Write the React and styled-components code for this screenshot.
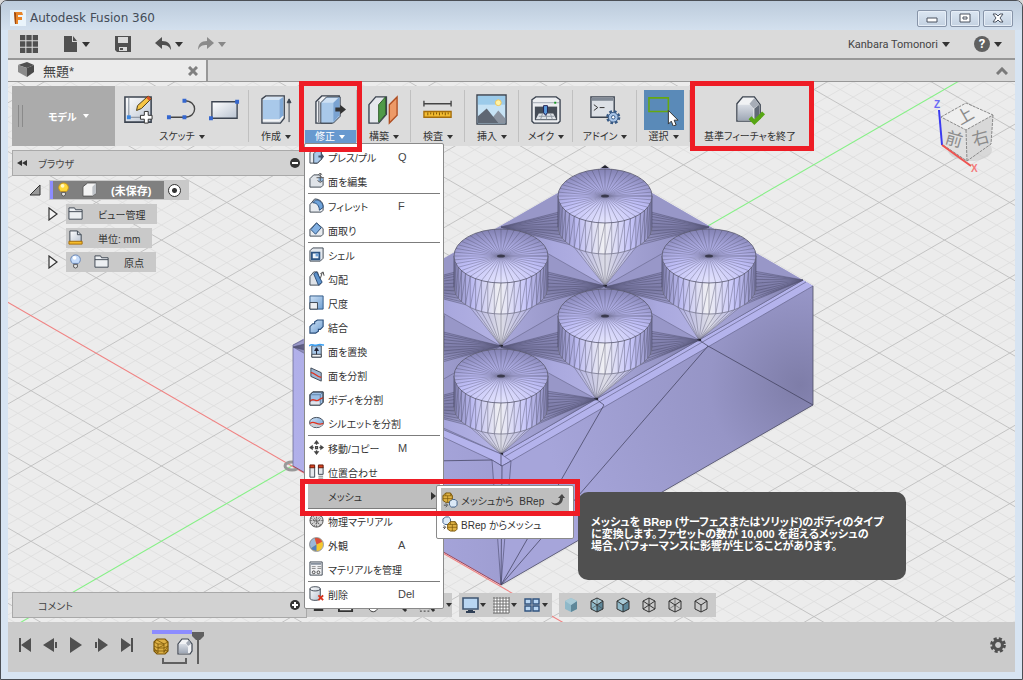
import React from 'react';
import styled, { createGlobalStyle, css } from 'styled-components';

const INK = '#3c4450';
const BLUE = '#a9c9ea';

const points = (list) => list.map((p) => p.join(',')).join(' ');

/* ---------- icons ---------- */

const BIG = {
  sketch: (
    <>
      <path d="M2 3h27v26H2z" fill="url(#steel)" stroke={INK} strokeWidth="1.6" />
      <path d="M6 4v20h20" fill="none" stroke="#7d8794" />
      <path d="M4 22h4v4H4z" fill="#3a86e0" />
      <path d="M14 17l1-5L26 2l3 3-10 10z" fill="#f6c544" stroke="#4a3a12" />
      <path d="M24 4l2-2 3 3-2 2z" fill="#d9532c" />
      <path d="M22 18h4v4h4v4h-4v4h-4v-4h-4v-4h4z" fill="#fff" stroke="#333" />
    </>
  ),
  line: (
    <>
      <path d="M3 24h16c14 0 14-17 0-17" fill="none" stroke="#454545" strokeWidth="1.4" />
      <path d="M1 22h4v4H1zM17 22h4v4h-4zM17 5h4v4h-4z" fill="#3567cf" />
    </>
  ),
  rect: (
    <>
      <path d="M3 8h26v17H3z" fill="url(#steel)" stroke={INK} strokeWidth="1.4" />
      <path d="M0 23h4v4H0zM27 6h4v4h-4z" fill="#3567cf" />
    </>
  ),
  create: (
    <>
      <path d="M2 5l4-3h19v23l-4 5H2z" fill="#dfe3e8" stroke={INK} strokeWidth="1.4" />
      <path d="M3 6h17v20H3z" fill={BLUE} />
      <path d="M3 6l4-3h17l-4 3z" fill="#d5e4f4" />
      <path d="M20 6l4-3v19l-4 4z" fill="#7fa9d8" />
      <path d="M3 27h17l4-4" fill="none" stroke="#fff" />
      <path d="M30 29V7M28 9l2-4 2 4z" fill={INK} stroke={INK} />
    </>
  ),
  modify: (
    <>
      <path d="M2 8l6-6h18l-1 21-7 7H2z" fill="#f0f2f5" stroke={INK} strokeWidth="1.4" />
      <path d="M7 9l6-6h14v20l-7 7H7z" fill={BLUE} stroke={INK} />
      <path d="M8 9l5-5h13l-5 5z" fill="#cfe1f4" />
      <path d="M20 9l6-6v19l-6 7z" fill="#7aa3d2" />
      <path d="M5 7v22" stroke={INK} />
      <path d="M22 14h5v-3l6 5-6 5v-3h-5z" fill="#333" />
    </>
  ),
  construct: (
    <>
      <path d="M1 11l7-8h11v18l-8 9H1z" fill="#e5e8ed" stroke={INK} strokeWidth="1.4" />
      <path d="M11 11l7-8v18l-7 8z" fill="#4f9a48" stroke="#2d5d2a" />
      <path d="M22 11l8-8v19l-8 8z" fill="#ed9a67" stroke="#b04f22" strokeWidth="1.4" />
    </>
  ),
  inspect: (
    <>
      <path d="M2 10h28M2 7v6M30 7v6" fill="none" stroke="#444" strokeWidth="1.4" />
      <path d="M2 18h28v6H2z" fill="#f3bc32" stroke="#a46d0c" strokeWidth="1.4" />
      <path d="M6 19v3M9 19v2M12 19v3M15 19v2M18 19v3M21 19v2M24 19v3M27 19v2" stroke="#7d5300" />
    </>
  ),
  insert: (
    <>
      <path d="M1 1h30v30H1z" fill="#c6e2f4" stroke={INK} strokeWidth="1.4" />
      <path d="M2 2h28v9H2z" fill="#9ccbea" />
      <circle cx="23" cy="9" r="3" fill="#fff3a6" stroke="#f0c659" />
      <path d="M15 27l8-10 7 8v5H15z" fill="#8b939f" />
      <path d="M2 23l9-8 12 15H2z" fill="#5f6773" />
    </>
  ),
  make: (
    <>
      <path d="M2 6l4-3h21l4 3v22l-2 2H4l-2-2z" fill="#eceef1" stroke={INK} strokeWidth="1.4" />
      <path d="M3 9h27" stroke="#9ba3ad" />
      <path d="M5 13h23v14H5z" fill="#454c57" />
      <path d="M9 20h15l3 6H6z" fill="#dfe3e8" />
      <path d="M9 23h16M13 20l-2 6M17 20v6M21 20l2 6" stroke="#929aa5" />
      <path d="M14 12h4v7l-2 3-2-3z" fill="#5c9ee0" stroke="#225" />
      <path d="M25 8h2v2h-2z" fill="#159a22" />
    </>
  ),
  addin: (
    <>
      <path d="M2 3h24v21H2z" fill="#dce0e6" stroke={INK} strokeWidth="1.4" />
      <path d="M3 4h22v3H3z" fill="#808995" />
      <path d="M5 11l4 3-4 3M11 14h5" fill="none" stroke="#333" />
      <circle cx="25" cy="24" r="6" fill="none" stroke="#375984" strokeWidth="2.6" strokeDasharray="2.7 2" />
      <circle cx="25" cy="24" r="5" fill="#a8c5e8" stroke="#375984" />
      <circle cx="25" cy="24" r="1.8" fill="#fff" stroke="#375984" />
    </>
  ),
  select: (
    <>
      <path d="M1 4h20v14H1z" fill="none" stroke="#66a80f" strokeWidth="1.6" />
      <path d="M21 17v14l3-3 2 5 3-1-2-5h4z" fill="#fff" stroke="#333" />
    </>
  ),
  finish: (
    <>
      <path d="M3 10l6-7h12l6 8v14l-4 3H3z" fill="#f1f2f4" stroke={INK} strokeWidth="1.4" />
      <path d="M4 11h13l3 5v11H4z" fill="url(#steelDark)" />
      <path d="M16 10l5-6 5 7-6 4z" fill="#a7adb7" />
      <path d="M21 15l5-4v13l-5 2z" fill="#606975" />
      <path d="M15 26l6 6 11-11-3-3-8 8-3-3z" fill="#57a613" />
    </>
  ),
};

const body = <path d="M1 6l4-4h6l4 4v7l-2 2H1z" fill="#dfe3e8" stroke={INK} />;

const gold = (x, y) => (
  <g transform={`translate(${x} ${y})`}>
    <path d="M0 3l3-3h5l2 3v5L8 10H3L0 8z" fill="#dfb244" stroke="#795508" />
    <path d="M0 3h10M5 3v7M0 6h10M3 0v3M8 0v3" fill="none" stroke="#795508" strokeWidth="0.7" />
  </g>
);

const silver = (x, y) => (
  <path
    transform={`translate(${x} ${y})`}
    d="M0 3l3-2h3l2 2v4L6 9H2L0 7z"
    fill="#dbe9f7"
    stroke="#3f5f88"
  />
);

const SMALL = {
  press: (
    <>
      <path d="M1 4l3-3h9v10l-4 4H1z" fill="#e8ebef" stroke={INK} />
      <path d="M5 5l3-3h5v9l-4 4H5z" fill={BLUE} stroke={INK} />
      <path d="M10 7h3V4l3 4-3 4V9h-3z" fill="#44546a" />
    </>
  ),
  editFace: (
    <>
      {body}
      <path d="M10 9h5V6l-5-2z" fill="#8eb6e3" />
      <path d="M12 0v9M8 5h8M10 2l2-2 2 2M9 8l3 2 3-2" fill="none" stroke="#555" />
    </>
  ),
  fillet: (
    <>
      <path d="M1 7l5-6c6 0 9 4 9 8v4l-2 2H1z" fill="#e8ebef" stroke={INK} />
      <path d="M4 5l3-3c5 0 8 4 8 8l-4 3c0-5-3-8-7-8z" fill="#6fa3da" stroke="#294c78" />
    </>
  ),
  chamfer: (
    <>
      <path d="M1 8l7-7 7 6v6l-2 2H1z" fill="#e8ebef" stroke={INK} />
      <path d="M2 8l6-7 5 5-6 7z" fill="#82b0e2" stroke="#294c78" />
    </>
  ),
  shell: (
    <>
      <path d="M1 4l3-3h11v11l-3 3H1z" fill="#e4e8ed" stroke={INK} />
      <path d="M3 6h8v7H3z" fill="#eef4fb" stroke="#2e5584" strokeWidth="2" />
      <path d="M7 7h3v3H7z" fill="#6fa3da" />
    </>
  ),
  draft: (
    <>
      <path d="M1 6l4-5h4l4 12-2 2H1z" fill="#dfe3e8" stroke={INK} />
      <path d="M5 3l3-2 6 11-4 3z" fill="#5e93cc" stroke="#294c78" />
      <path d="M12 8l2-6M12 3l3-2 1 4" fill="none" stroke="#444" />
    </>
  ),
  scale: (
    <>
      <path d="M1 1h14v14H1z" fill="url(#sky)" stroke="#2e5584" />
      <path d="M1 8h8v7H1z" fill="#eef0f3" stroke={INK} />
    </>
  ),
  combine: (
    <path
      d="M1 8l3-3h2V3l3-2h6v7l-3 3h-2v2l-3 2H1z"
      fill="url(#sky)"
      stroke="#294c78"
      strokeWidth="1.2"
    />
  ),
  replace: (
    <>
      <path d="M3 3h10v12H3z" fill={BLUE} stroke={INK} />
      <path d="M3 12h10v3H3z" fill="#f2f2f2" stroke={INK} />
      <path d="M0 3c4-3 5 1 9-1 3-1 4 0 7 0" fill="none" stroke="#3aa0f5" strokeWidth="1.6" />
      <path d="M8 12V6M6 8l2-3 2 3z" fill="#223" stroke="#223" />
    </>
  ),
  splitFace: (
    <>
      <path d="M2 1l11 5v9L2 10z" fill="#9db6d3" stroke={INK} />
      <path d="M2 6c3-1 5 4 11 5" fill="none" stroke="#e0321f" strokeWidth="1.4" />
    </>
  ),
  splitBody: (
    <>
      <path d="M1 4l3-3h11v11l-3 3H1z" fill="#9cbfe5" stroke={INK} />
      <path d="M1 11h11v4H1z" fill="#e0e4ea" />
      <path d="M1 4h11l3-3M12 4v11" fill="none" stroke="#5d7fa8" />
      <path d="M1 11c4-5 6 2 10-2l4-2" fill="none" stroke="#e0321f" strokeWidth="1.4" />
      <path d="M1 4l3-3h11v11l-3 3H1z" fill="none" stroke={INK} />
    </>
  ),
  silhouette: (
    <>
      <ellipse cx="8" cy="8" rx="7.4" ry="5.4" fill="url(#sky)" stroke={INK} />
      <path d="M1 9c5-4 7 3 14 0-1 3-4 4-7 4s-6-1-7-4z" fill="#c9ced6" />
      <path d="M1 9c5-4 7 3 14 0" fill="none" stroke="#e0321f" strokeWidth="1.4" />
    </>
  ),
  move: (
    <>
      <path d="M8 0l3 4H5zM8 16l3-4H5zM0 8l4-3v6zM16 8l-4-3v6z" fill="#444" />
      <path d="M7 7h2v2H7zM8 3v2M8 11v2M3 8h2M11 8h2" fill="none" stroke="#444" strokeWidth="1.4" />
    </>
  ),
  align: (
    <>
      <path d="M1 3h5v11H1zM10 3h5v8h-5z" fill="#e4e7eb" stroke={INK} />
      <path d="M1 1h5v3H1zM10 1h5v3h-5z" fill="#d9421f" stroke="#651a0a" />
      <path d="M10 13h5M10 15h5" stroke="#777" />
    </>
  ),
  material: (
    <>
      <circle cx="8" cy="8" r="7" fill="#d5d5d5" stroke="#555" />
      <path
        d="M2 5l11 8M3 12L13 3M1 8h14M8 1v14M4 3l8 11M5 14l8-9"
        stroke="#666"
        strokeDasharray="2 1"
      />
    </>
  ),
  appearance: (
    <>
      <circle cx="8" cy="8" r="7" fill="#f5c82e" />
      <path d="M8 8L2 12A7 7 0 0 1 6 1z" fill="#9cb7d9" />
      <path d="M8 8L6 1a7 7 0 0 1 8 4z" fill="#dc4e3b" />
      <path d="M8 8l-6 4a7 7 0 0 0 6 3z" fill="#4f7fc4" />
      <circle cx="8" cy="8" r="7.4" fill="none" stroke="#777" strokeWidth="0.8" />
    </>
  ),
  manage: (
    <>
      <path d="M1 1h13v14H1z" fill="#f2f3f5" stroke={INK} />
      <path d="M2 2h11v2H2z" fill="#87919e" />
      <path d="M3 6h4M3 8h4M9 6h4M9 8h4" stroke="#888" />
      <circle cx="5" cy="12" r="1.5" fill="none" stroke="#444" />
      <circle cx="10" cy="12" r="1.5" fill="none" stroke="#444" />
    </>
  ),
  remove: (
    <>
      <path d="M1 3c0-3 11-3 11 0v10c0 3-11 3-11 0z" fill="url(#steel)" stroke={INK} />
      <path d="M1 3c0 3 11 3 11 0" fill="none" stroke={INK} />
      <path d="M10 10l5 5M15 10l-5 5" stroke="#d8321c" strokeWidth="2" />
    </>
  ),
  toBRep: (
    <>
      {gold(1, 1)}
      {silver(8, 7)}
      <path d="M2 14h3M4 12l2 2-2 2" fill="none" stroke="#444" />
    </>
  ),
  toMesh: (
    <>
      {silver(1, 0)}
      {gold(6, 6)}
      <path d="M1 12h2M2 10l2 2-2 2" fill="none" stroke="#444" />
    </>
  ),
  cube: (
    <>
      <path d="M1 5l5-4h9v11l-4 3H1z" fill="#f4f4f4" stroke="#555" />
      <path d="M11 5l4-4v11l-4 3z" fill="#bfc3c8" />
    </>
  ),
  folder: (
    <>
      <path d="M1 4V2h6l1 2h7v10H1z" fill="#eceff2" stroke={INK} />
      <path d="M1 6h14" stroke={INK} />
    </>
  ),
  units: (
    <>
      <path d="M2 1h8l4 4v8H2z" fill="url(#steel)" stroke={INK} />
      <path d="M10 1v4h4" fill="none" stroke={INK} />
      <path d="M1 12h14v3H1z" fill="#f6bd2c" stroke="#a66c08" />
    </>
  ),
  bulb: (
    <>
      <path d="M5 10C1 7 3 1 8 1s7 6 3 9z" fill="#ffd83a" stroke="#c99516" />
      <ellipse cx="7" cy="4" rx="2" ry="2" fill="#fff8c4" />
      <path d="M6 11h4v3L8 15l-2-1z" fill="#e3e3e3" stroke="#555" />
    </>
  ),
  bulbOff: (
    <>
      <path d="M5 10C1 7 3 1 8 1s7 6 3 9z" fill="#c5dcfb" stroke="#6583b3" />
      <ellipse cx="7" cy="4" rx="2" ry="2" fill="#fff" />
      <path d="M6 11h4v3L8 15l-2-1z" fill="#e3e3e3" stroke="#555" />
    </>
  ),
  grid9: (
    <path
      d="M0 0h5v5H0zM6 0h5v5H6zM12 0h5v5h-5zM0 6h5v5H0zM6 6h5v5H6zM12 6h5v5h-5zM0 12h5v5H0zM6 12h5v5H6zM12 12h5v5h-5z"
      fill="#505050"
    />
  ),
  file: <path d="M2 0h8v6h5v10H2zM11 0l4 5h-4z" fill="#505050" />,
  save: (
    <>
      <path d="M0 0h16v16H2l-2-2z" fill="#505050" />
      <path d="M3 1h10v6H3zM4 11h8v4H4z" fill="#dadada" />
      <path d="M5 12h3v2H5z" fill="#505050" />
    </>
  ),
  undo: <path d="M0 7l7-6v4c6 0 9 3 9 9-2-4-4-5-9-5v4z" fill="#505050" />,
  redo: <path d="M16 7L9 1v4c-6 0-9 3-9 9 2-4 4-5 9-5v4z" fill="#8b8b8b" />,
  doc: (
    <>
      <path d="M0 3l9-3 7 3-7 3z" fill="#505050" />
      <path d="M0 3l9 3v9l-9-5z" fill="#8b8b8b" />
      <path d="M9 6l7-3v7l-7 5z" fill="#4a4a4a" />
    </>
  ),
  monitor: (
    <>
      <path d="M1 1h15v11H1z" fill="#b9d6f2" stroke="#3f5672" strokeWidth="1.6" />
      <path d="M6 13h5v1h2v2H4v-2h2z" fill="#2f3f55" />
    </>
  ),
  mesh: (
    <>
      <path d="M0 0h16v16H0z" fill="#fff" />
      <path
        d="M1 0v16M4 0v16M7 0v16M10 0v16M13 0v16M16 0v16M0 1h16M0 4h16M0 7h16M0 10h16M0 13h16M0 16h16"
        stroke="#333"
        opacity="0.7"
      />
    </>
  ),
  quad: (
    <path
      d="M1 2h6v5H1zM9 2h6v5H9zM1 9h6v5H1zM9 9h6v5H9z"
      fill="#b9d6f2"
      stroke="#32547f"
      strokeWidth="1.4"
    />
  ),
  orbit: <path d="M8 1l3 4H9v6h4v4H3v-4h3V5H4z" fill="#333" />,
  lookAt: <path d="M1 3h14v12H1z" fill="#eee" stroke="#333" strokeWidth="2" />,
  pan: <path d="M3 8c0-7 2-7 3-2 0-7 3-7 3 0 0-6 3-5 3 1 2-4 3 2 2 4-2 6-8 6-10 1z" fill="#fff" stroke="#333" />,
  zoomIcon: (
    <>
      <circle cx="5" cy="5" r="4" fill="#fff" stroke="#333" strokeWidth="1.6" />
      <path d="M8 8l7 7" stroke="#333" strokeWidth="3" />
    </>
  ),
  fit: (
    <>
      <path d="M1 1h10v14H1z" fill="none" stroke="#333" strokeDasharray="2 2" />
      <circle cx="8" cy="6" r="4" fill="#fff" stroke="#333" strokeWidth="1.6" />
      <path d="M11 9l5 6" stroke="#333" strokeWidth="3" />
    </>
  ),
  timelineMesh: (
    <>
      <path d="M1 4l3-3h8l3 3v9l-3 3H4l-3-3z" fill="#ddb045" stroke="#795508" strokeWidth="1.2" />
      <path
        d="M1 4l4 2h6l4-2M1 8l4 2h6l4-2M1 12l4 1h6l4-1M5 6v9M11 6v9M1 10l4 5M5 10l6-3M11 14l4-6M4 2l7 4"
        fill="none"
        stroke="#795508"
        strokeWidth="0.8"
      />
    </>
  ),
  timelineBody: (
    <>
      <path d="M1 6l4-5h6l4 5v7l-2 3H1z" fill="#f2f3f5" stroke={INK} strokeWidth="1.2" />
      <path d="M2 6h7l2 3v6H2z" fill="url(#steelDark)" />
      <path d="M9 5l3-3 2 4-3 2z" fill="#a4abb6" />
    </>
  ),
  gear: (
    <>
      <circle cx="8" cy="8" r="6.4" fill="none" stroke="#505050" strokeWidth="3" strokeDasharray="3 2.03" />
      <circle cx="8" cy="8" r="4.4" fill="none" stroke="#505050" strokeWidth="3" />
    </>
  ),
  first: <path d="M1 1h2v14H1zM13 1v14L3 8z" fill="#505050" />,
  prev: <path d="M11 1v14L0 8zM12 5h2v6h-2z" fill="#505050" />,
  play: <path d="M2 0l12 8-12 8z" fill="#505050" />,
  next: <path d="M5 1v14l10-7zM2 5h2v6H2z" fill="#505050" />,
  last: <path d="M13 1h2v14h-2zM3 1v14l10-7z" fill="#505050" />,
};

const shadeIcon = (fill, mode) => (
  <>
    {fill && (
      <>
        <path d="M8 1l6 3v8l-6 3-6-3V4z" fill="#8fb9c9" />
        <path d="M8 8l6-4v8l-6 3z" fill="#5e8799" />
        <path d="M2 4l6-3 6 3-6 4z" fill="#a9cbd7" />
      </>
    )}
    {mode > 0 && (
      <path d="M8 1l6 3v8l-6 3-6-3V4zM2 4l6 4 6-4M8 8v7" fill="none" stroke="#333" />
    )}
    {mode > 1 && (
      <path d="M8 1v7M2 12l6-4 6 4" fill="none" stroke="#333" opacity={mode > 2 ? 1 : 0.5} />
    )}
  </>
);

const Icon = ({ name, size = 16 }) => (
  <Drawing
    width={size}
    height={size}
    viewBox={size === 32 ? '0 0 33 33' : '0 0 17 17'}
    aria-hidden="true"
  >
    {size === 32 ? BIG[name] : SMALL[name]}
  </Drawing>
);

const GradientDefs = () => (
  <Defs width="0" height="0" aria-hidden="true">
    <defs>
      <linearGradient id="steel" x1="0" y1="0" x2="1" y2="1">
        <stop offset="0" stopColor="#ffffff" />
        <stop offset="1" stopColor="#b9c3d1" />
      </linearGradient>
      <linearGradient id="steelDark" x1="0" y1="0" x2="0" y2="1">
        <stop offset="0" stopColor="#dadee5" />
        <stop offset="1" stopColor="#9fa8b6" />
      </linearGradient>
      <linearGradient id="sky" x1="0" y1="0" x2="1" y2="1">
        <stop offset="0" stopColor="#cfe2f6" />
        <stop offset="1" stopColor="#6f9fd2" />
      </linearGradient>
    </defs>
  </Defs>
);

/* ---------- 3D scene ---------- */

const SLOPE = 0.577;
const ORIGIN = [292, 466];
const STEP = 15.06;

const gridPath = (major) => {
  let d = '';
  for (let i = -75; i <= 75; i += 1) {
    if ((i % 5 === 0) === major && i !== 0) {
      [1, -1].forEach((dir) => {
        const y = (x) => ORIGIN[1] + i * STEP + dir * SLOPE * (x - ORIGIN[0]);
        d += `M-100 ${y(-100)}L1200 ${y(1200)}`;
      });
    }
  }
  return d;
};

const MINOR = gridPath(false);
const MAJOR = gridPath(true);

const RX = 47;
const RY = 27;
const TALL = 31;
const SEGMENTS = 44;

const STUDS = [
  { c: [605, 196], right: [709, 227], down: [605, 286] },
  { c: [501, 256], right: [605, 286], down: [501, 346] },
  { c: [709, 256], right: [803, 280], down: [699, 340] },
  { c: [397, 316], right: [501, 346], down: [397, 406] },
  { c: [605, 316], right: [699, 340], down: [596, 399] },
  { c: [501, 376], right: [596, 399], down: [501, 454] },
];

const ring = (cx, cy, from, to) => {
  const out = [];
  for (let i = from; i <= to; i += 1) {
    const a = (i / SEGMENTS) * Math.PI * 2;
    out.push([cx + RX * Math.cos(a), cy + RY * Math.sin(a)]);
  }
  return out;
};

const spokes = (tip, list) => list.map((p) => `M${tip[0]} ${tip[1]}L${p[0]} ${p[1]}`).join('');

const Stud = ({ c, right, down }) => {
  const [cx, cy] = c;
  const left = [cx - 104, cy + TALL];
  const middle = [cx, cy + TALL];
  const rightRing = ring(cx, cy + TALL, -5, 5);
  const downRing = ring(cx, cy + TALL, 6, 16);
  const leftRing = ring(cx, cy + TALL, 17, 27);
  const top = ring(cx, cy, 0, SEGMENTS);
  const front = ring(cx, cy, 0, SEGMENTS / 2);
  const base = ring(cx, cy + TALL, 0, SEGMENTS / 2);
  const wall = front
    .map((p, i) => {
      const b = base[i];
      const n = base[i + 1] || b;
      return `M${p[0]} ${p[1]}L${b[0]} ${b[1]}M${p[0]} ${p[1]}L${n[0]} ${n[1]}`;
    })
    .join('');

  return (
    <g>
      <polygon points={points([left, middle, down])} fill="url(#slopeLeft)" />
      <polygon points={points([right, middle, down])} fill="url(#slopeRight)" />
      <polygon points={points([left, ...leftRing])} fill="url(#fanSide)" />
      <polygon points={points([right, ...rightRing])} fill="url(#fanSide)" />
      <polygon points={points([down, ...downRing])} fill="url(#fanDown)" />
      <path
        d={spokes(left, leftRing) + spokes(right, rightRing)}
        stroke="#3a3a56"
        strokeWidth="0.6"
        opacity="0.6"
      />
      <path d={spokes(down, downRing)} stroke="#45455c" strokeWidth="0.6" opacity="0.6" />
      <path d={`M${left}L${down}L${right}`} fill="none" stroke="#4c4c6c" strokeWidth="0.6" opacity="0.7" />
      <polygon points={points([...front, ...[...base].reverse()])} fill="url(#wall)" />
      <path d={wall} stroke="#4c4c66" strokeWidth="0.6" opacity="0.65" />
      <polyline points={points(base)} fill="none" stroke="#6c6c80" strokeWidth="0.7" />
      <ellipse cx={cx} cy={cy} rx={RX} ry={RY} fill="url(#cap)" stroke="#5c5c70" strokeWidth="0.8" />
      <path d={spokes(c, top)} stroke="#46465e" strokeWidth="0.5" opacity="0.65" />
      <ellipse cx={cx} cy={cy} rx="4" ry="1.6" fill="#23232f" opacity="0.7" />
      <ellipse cx={down[0]} cy={down[1]} rx="2.4" ry="1.2" fill="#22222c" />
    </g>
  );
};

const Scene = () => (
  <SceneSvg viewBox="8 82 1007 540" preserveAspectRatio="xMidYMid slice" aria-label="3D ビュー">
    <defs>
      <linearGradient id="wall">
        <stop offset="0" stopColor="#8b8abb" />
        <stop offset="0.2" stopColor="#bdbcf2" />
        <stop offset="0.48" stopColor="#efeff3" />
        <stop offset="0.78" stopColor="#c6c5fa" />
        <stop offset="1" stopColor="#8b8abb" />
      </linearGradient>
      <radialGradient id="cap" cx="0.5" cy="0.95" r="0.95">
        <stop offset="0" stopColor="#e2e2fc" />
        <stop offset="0.5" stopColor="#bebdf6" />
        <stop offset="1" stopColor="#8281b2" />
      </radialGradient>
      <linearGradient id="fanSide" x1="0" y1="0" x2="0" y2="1">
        <stop offset="0" stopColor="#8d8cbc" />
        <stop offset="0.6" stopColor="#7c7ba6" />
        <stop offset="1" stopColor="#a3a2d2" />
      </linearGradient>
      <linearGradient id="fanDown">
        <stop offset="0" stopColor="#b0afe2" />
        <stop offset="0.5" stopColor="#dcdce6" />
        <stop offset="1" stopColor="#b0afe2" />
      </linearGradient>
      <linearGradient id="slopeLeft">
        <stop offset="0" stopColor="#8887b4" />
        <stop offset="0.5" stopColor="#a9a8de" />
        <stop offset="1" stopColor="#b4b3e4" />
      </linearGradient>
      <linearGradient id="slopeRight">
        <stop offset="0" stopColor="#a9a8da" />
        <stop offset="0.6" stopColor="#9897c8" />
        <stop offset="1" stopColor="#7c7ba6" />
      </linearGradient>
      <radialGradient id="rightFace" gradientUnits="userSpaceOnUse" cx="800" cy="385" r="260">
        <stop offset="0" stopColor="#7e7da8" />
        <stop offset="0.35" stopColor="#9695c6" />
        <stop offset="1" stopColor="#a6a5da" />
      </radialGradient>
      <linearGradient id="leftFace">
        <stop offset="0" stopColor="#b1b0ea" />
        <stop offset="1" stopColor="#9f9ed2" />
      </linearGradient>
    </defs>

    <rect x="-100" y="0" width="1300" height="760" fill="#ececec" />
    <path d={MINOR} stroke="#dddddd" strokeWidth="0.8" />
    <path d={MAJOR} stroke="#bebebe" strokeWidth="0.9" />
    <path d="M-100 692L1200 -58" stroke="#86f086" strokeWidth="1.1" />
    <path d="M-100 240L1200 990" stroke="#f08282" strokeWidth="1.1" />
    <ellipse cx="292" cy="466" rx="7" ry="4" fill="none" stroke="#999" strokeWidth="3" />

    <polygon points="293,345 605,166 813,286 813,405 501,585 293,466" fill="#9f9ed2" />
    <polygon points="293,345 501,460 501,585 293,466" fill="url(#leftFace)" />
    <polygon points="501,460 813,286 813,405 501,585" fill="url(#rightFace)" />
    <polygon points="293,345 605,166 813,286 501,462" fill="#9897c8" />
    <polygon points="501,454 803,280 813,286 511,461" fill="#b4b3ec" />
    <path d="M501 454L803 280M504 457L806 282M511 461L813 286" stroke="#66668c" strokeWidth="0.7" />
    {STUDS.map((stud) => (
      <Stud key={stud.c.join('-')} {...stud} />
    ))}
    <path
      d="M430 424L501 454L511 461L502 466L492 460L430 431z"
      fill="#b4b3ec"
      stroke="#66658c"
      strokeWidth="0.7"
    />
    <polygon points="492,460 502,466 511,461 501,585" fill="#a6a5da" stroke="#54547a" strokeWidth="0.7" />
    <path
      d="M502 466L501 585M708 346L501 585M708 346L813 405M604 405L501 585M430 461L492 460M699 340L708 346M596 399L604 405M501 454V466"
      fill="none"
      stroke="#3c3c58"
      strokeWidth="0.7"
    />
    <path d="M813 286V405L501 585" fill="none" stroke="#4e4e62" strokeWidth="0.8" />
    <path d="M293 466L501 585" stroke="#a04458" strokeWidth="1" />
    <path d="M293 345V466M293 345L303 340" stroke="#6c6c96" strokeWidth="0.8" />
    <path d="M605 165l-4 3h8z" fill="#23232f" />
  </SceneSvg>
);

const ViewCube = () => (
  <CubeSvg width="84" height="84" viewBox="928 92 84 84" aria-label="ビューキューブ">
    <ellipse cx="970" cy="150" rx="22" ry="11" fill="#c4c4c4" opacity="0.5" />
    <polygon points="941,117 966,130 967,161 943,145" fill="#e0e0e0" />
    <polygon points="966,130 993,115 991,144 967,161" fill="#d8d8d8" />
    <polygon points="941,117 966,103 993,115 966,130" fill="#efefef" />
    <path
      d="M941 117L966 103L993 115L966 130zM966 130L967 161M993 115L991 144L967 161L943 145"
      fill="none"
      stroke="#8a8a8a"
      strokeDasharray="3 1"
    />
    <path d="M939 110L942 145" stroke="#3b3bf0" strokeWidth="2" />
    <path d="M942 145L971 166" stroke="#ef5350" strokeWidth="2" />
    <CubeText x="957" y="122" transform="rotate(-30 965 117)">上</CubeText>
    <CubeText x="946" y="145" transform="rotate(16 953 138)">前</CubeText>
    <CubeText x="972" y="144" transform="rotate(-16 980 138)">右</CubeText>
    <AxisText x="934" y="108" fill="#6a6af5">Z</AxisText>
    <AxisText x="971" y="172" fill="#f47a7a">X</AxisText>
  </CubeSvg>
);

/* ---------- data ---------- */

const RIBBON = [
  { label: 'スケッチ', icons: ['sketch', 'line', 'rect'], width: 134 },
  { label: '作成', icons: ['create'], width: 54 },
  { label: '修正', icons: ['modify'], width: 54, open: true },
  { label: '構築', icons: ['construct'], width: 54 },
  { label: '検査', icons: ['inspect'], width: 54 },
  { label: '挿入', icons: ['insert'], width: 54 },
  { label: 'メイク', icons: ['make'], width: 54 },
  { label: 'アドイン', icons: ['addin'], width: 64 },
  { label: '選択', icons: ['select'], width: 53, picked: true },
];

const MENU = [
  { label: 'プレス/プル', icon: 'press', hotkey: 'Q' },
  { label: '面を編集', icon: 'editFace', end: true },
  { label: 'フィレット', icon: 'fillet', hotkey: 'F' },
  { label: '面取り', icon: 'chamfer', end: true },
  { label: 'シェル', icon: 'shell' },
  { label: '勾配', icon: 'draft' },
  { label: '尺度', icon: 'scale' },
  { label: '結合', icon: 'combine' },
  { label: '面を置換', icon: 'replace' },
  { label: '面を分割', icon: 'splitFace' },
  { label: 'ボディを分割', icon: 'splitBody' },
  { label: 'シルエットを分割', icon: 'silhouette', end: true },
  { label: '移動/コピー', icon: 'move', hotkey: 'M' },
  { label: '位置合わせ', icon: 'align' },
  { label: 'メッシュ', submenu: true, end: true },
  { label: '物理マテリアル', icon: 'material' },
  { label: '外観', icon: 'appearance', hotkey: 'A' },
  { label: 'マテリアルを管理', icon: 'manage', end: true },
  { label: '削除', icon: 'remove', hotkey: 'Del' },
];

const SHADES = [
  [true, 0],
  [true, 2],
  [true, 1],
  [false, 3],
  [false, 2],
  [false, 1],
];

/* ---------- parts ---------- */

const Submenu = () => (
  <SubmenuBox role="menu">
    <MenuItem type="button" role="menuitem" $active>
      <Icon name="toBRep" />
      <MenuLabel>メッシュから&nbsp; BRep</MenuLabel>
      <Drawing width="14" height="14" viewBox="0 0 14 14" aria-hidden="true">
        <path d="M0 9c4 3 9 1 9-4H7l4-4 3 4h-2c0 7-8 10-12 4z" fill="#484848" />
      </Drawing>
    </MenuItem>
    <MenuItem type="button" role="menuitem">
      <Icon name="toMesh" />
      <MenuLabel>BRep からメッシュ</MenuLabel>
    </MenuItem>
    <Tooltip role="tooltip">
      メッシュを BRep (サーフェスまたはソリッド)のボディのタイプ
      <br />
      に変換します。ファセットの数が 10,000 を超えるメッシュの
      <br />
      場合、パフォーマンスに影響が生じることがあります。
    </Tooltip>
  </SubmenuBox>
);

const ModifyMenu = () => (
  <MenuPanel role="menu">
    {MENU.map(({ label, icon, hotkey, end, submenu }) => (
      <MenuRow key={label} $end={end}>
        <MenuItem type="button" role="menuitem" $active={submenu}>
          {icon ? <Icon name={icon} /> : <IconGap />}
          <MenuLabel>{label}</MenuLabel>
          {hotkey && <Hotkey>{hotkey}</Hotkey>}
          {submenu && <SubArrow />}
        </MenuItem>
        {submenu && <Submenu />}
        {submenu && <Highlight $kind="row" />}
      </MenuRow>
    ))}
  </MenuPanel>
);

const Ribbon = () => (
  <RibbonBar>
    <ModeButton type="button">
      <Grip />
      <span>モデル</span>
      <Caret color="#fff" />
    </ModeButton>
    {RIBBON.map(({ label, icons, width, open, picked }) => (
      <Group key={label} $width={width}>
        <Tools>
          {icons.map((name) => (
            <Tool key={name} type="button" $picked={picked} aria-label={name}>
              <Icon name={name} size={32} />
            </Tool>
          ))}
        </Tools>
        <GroupLabel type="button" $open={open}>
          {label}
          <Caret color={open ? '#fff' : '#333'} />
        </GroupLabel>
        {open && <ModifyMenu />}
        {open && <Highlight $kind="modify" />}
      </Group>
    ))}
    <Group $width={120} $last>
      <Tools>
        <Tool type="button" aria-label="finish">
          <Icon name="finish" size={32} />
        </Tool>
      </Tools>
      <GroupLabel type="button">基準フィーチャを終了</GroupLabel>
      <Highlight $kind="finish" />
    </Group>
  </RibbonBar>
);

const Expander = () => (
  <Drawing width="10" height="14" viewBox="0 0 10 14" aria-hidden="true">
    <path d="M1 1l8 6-8 6z" fill="#f4f4f4" stroke="#333" strokeWidth="1.2" />
  </Drawing>
);

const BrowserTree = () => (
  <Tree>
    <TreeRow>
      <Drawing width="12" height="12" viewBox="0 0 12 12" aria-hidden="true">
        <path d="M11 1v10H1z" fill="#999" stroke="#333" />
      </Drawing>
      <RootNode>
        <RootName>
          <Icon name="bulb" />
          <Icon name="cube" />
          <span>(未保存)</span>
        </RootName>
        <Radio type="radio" name="active-component" aria-label="未保存" defaultChecked />
      </RootNode>
    </TreeRow>
    <TreeRow $nested>
      <Expander />
      <Node>
        <Icon name="folder" />
        <span>ビュー管理</span>
      </Node>
    </TreeRow>
    <TreeRow $nested>
      <ExpanderGap />
      <Node>
        <Icon name="units" />
        <span>単位: mm</span>
      </Node>
    </TreeRow>
    <TreeRow $nested>
      <Expander />
      <Node>
        <Icon name="bulbOff" />
        <Icon name="folder" />
        <span>原点</span>
      </Node>
    </TreeRow>
  </Tree>
);

const App = () => (
  <>
    <GlobalStyle />
    <GradientDefs />
    <Window>
      <TitleBar>
        <Drawing width="16" height="16" viewBox="0 0 16 16" aria-hidden="true">
          <path d="M0 0h16v16H0z" fill="#eaf4fb" />
          <path d="M4 2h8l1 3H8v2h4v3H8v4H5z" fill="#e98427" />
          <path d="M4 2l2 1v11H5z" fill="#9c4b12" />
        </Drawing>
        <Title>Autodesk Fusion 360</Title>
        <WindowButton type="button" aria-label="最小化">
          <Drawing width="12" height="12" viewBox="0 0 12 12">
            <path d="M1 6h10v4H1z" fill="#fff" stroke="#4b5361" />
          </Drawing>
        </WindowButton>
        <WindowButton type="button" aria-label="最大化">
          <Drawing width="12" height="12" viewBox="0 0 12 12">
            <path d="M1 2h10v8H1zM4 5h4v2H4z" fill="#fff" stroke="#4b5361" />
          </Drawing>
        </WindowButton>
        <WindowButton type="button" aria-label="閉じる">
          <Drawing width="12" height="12" viewBox="0 0 12 12">
            <path d="M1 2h3l2 2 2-2h3L8 6l3 4H8L6 8l-2 2H1l3-4z" fill="#fff" stroke="#4b5361" />
          </Drawing>
        </WindowButton>
      </TitleBar>

      <QuickBar>
        <QuickButton type="button" $gap={24} aria-label="データパネル">
          <Icon name="grid9" size={18} />
        </QuickButton>
        <QuickButton type="button" $gap={25} aria-label="ファイル">
          <Icon name="file" size={17} />
          <Caret color="#333" $large />
        </QuickButton>
        <QuickButton type="button" $gap={23} aria-label="保存">
          <Icon name="save" size={17} />
        </QuickButton>
        <QuickButton type="button" $gap={15} aria-label="元に戻す">
          <Icon name="undo" size={17} />
          <Caret color="#333" $large />
        </QuickButton>
        <QuickButton type="button" aria-label="やり直し">
          <Icon name="redo" size={17} />
          <Caret color="#888" $large />
        </QuickButton>
        <Account>
          <AccountButton type="button">
            Kanbara Tomonori
            <Caret color="#333" $large />
          </AccountButton>
          <AccountButton type="button" aria-label="ヘルプ">
            <Help>?</Help>
            <Caret color="#333" $large />
          </AccountButton>
        </Account>
      </QuickBar>

      <TabBar>
        <Tab>
          <Icon name="doc" size={17} />
          <TabName>無題*</TabName>
          <TabClose type="button" aria-label="タブを閉じる">
            <Drawing width="10" height="10" viewBox="0 0 10 10">
              <path d="M1 1l8 8M9 1L1 9" stroke="#808080" strokeWidth="3" />
            </Drawing>
          </TabClose>
        </Tab>
        <TabClose type="button" aria-label="折りたたむ">
          <Drawing width="12" height="8" viewBox="0 0 12 8">
            <path d="M1 7l5-5 5 5" fill="none" stroke="#7a7a7a" strokeWidth="3" />
          </Drawing>
        </TabClose>
      </TabBar>

      <Viewport>
        <Scene />
        <Overlay>
          <Ribbon />
          <Panel>
            <Drawing width="11" height="8" viewBox="0 0 11 8" aria-hidden="true">
              <path d="M5 1v6L0 4zM10 1v6L5 4z" fill="#333" />
            </Drawing>
            <PanelTitle>ブラウザ</PanelTitle>
            <PanelToggle type="button" aria-label="ブラウザを閉じる">
              <Drawing width="10" height="10" viewBox="0 0 10 10">
                <circle cx="5" cy="5" r="5" fill="#333" />
                <path d="M2 5h6" stroke="#fff" strokeWidth="2" />
              </Drawing>
            </PanelToggle>
          </Panel>
          <BrowserTree />
          <BottomRow>
            <Panel>
              <PanelGap />
              <PanelTitle>コメント</PanelTitle>
              <PanelToggle type="button" aria-label="コメントを開く">
                <Drawing width="10" height="10" viewBox="0 0 10 10">
                  <circle cx="5" cy="5" r="5" fill="#333" />
                  <path d="M2 5h6M5 2v6" stroke="#fff" strokeWidth="2" />
                </Drawing>
              </PanelToggle>
            </Panel>
            <NavBar>
              {['orbit', 'lookAt', 'pan', 'zoomIcon', 'fit'].map((name) => (
                <NavButton key={name} type="button" aria-label={name}>
                  <Icon name={name} />
                </NavButton>
              ))}
              <Caret color="#333" />
            </NavBar>
            <DisplayBar>
              {['monitor', 'mesh', 'quad'].map((name) => (
                <NavButton key={name} type="button" aria-label={name}>
                  <Icon name={name} size={17} />
                  <Caret color="#333" />
                </NavButton>
              ))}
            </DisplayBar>
            <ShadeBar>
              {SHADES.map(([fill, mode]) => (
                <NavButton key={`${fill}-${mode}`} type="button" aria-label="表示スタイル">
                  <Drawing width="16" height="16" viewBox="0 0 16 16">
                    {shadeIcon(fill, mode)}
                  </Drawing>
                </NavButton>
              ))}
            </ShadeBar>
          </BottomRow>
        </Overlay>
        <ViewCube />
      </Viewport>

      <Timeline>
        <Playback>
          {['first', 'prev', 'play', 'next', 'last'].map((name) => (
            <NavButton key={name} type="button" aria-label={name}>
              <Icon name={name} size={17} />
            </NavButton>
          ))}
        </Playback>
        <Track>
          <TrackRange />
          <TrackItems>
            <Icon name="timelineMesh" size={17} />
            <Icon name="timelineBody" size={17} />
          </TrackItems>
          <Bracket />
        </Track>
        <Marker width="12" height="34" viewBox="0 0 12 34" aria-hidden="true">
          <path d="M0 1h12v4L8 9H4L0 5zM5 8h2v25H5z" fill="#606060" />
        </Marker>
        <SettingsButton type="button" aria-label="設定">
          <Icon name="gear" size={17} />
        </SettingsButton>
      </Timeline>
    </Window>
  </>
);

/* ---------- styles ---------- */

const GlobalStyle = createGlobalStyle`
  * {
    box-sizing: border-box;
  }

  body {
    margin: 0;
    background: #d8d8d8;
    color: #333;
    font-family: 'Liberation Sans', 'Noto Sans CJK JP', sans-serif;
    font-size: 10px;
    font-feature-settings: 'palt';
  }

  button {
    padding: 0;
    border: 0;
    background: none;
    color: inherit;
    font: inherit;
    font-feature-settings: inherit;
    cursor: pointer;
  }
`;

const Drawing = styled.svg`
  display: block;
  flex: none;
`;

const Defs = styled.svg`
  position: absolute;
`;

const Window = styled.div`
  display: flex;
  flex-direction: column;
  min-height: 100vh;
  padding: 0 7px 7px;
  border: 1px solid #4b4f55;
  border-radius: 7px 7px 0 0;
  background: #d7e4f2;
`;

const TitleBar = styled.header`
  display: flex;
  align-items: center;
  gap: 3px;
  height: 29px;
  margin: 0 -7px;
  padding: 5px 9px 0;
  border-radius: 6px 6px 0 0;
  background: linear-gradient(#bccbdb, #d3e0ee);
`;

const Title = styled.h1`
  flex: 1;
  margin: 0;
  padding-left: 1px;
  color: #444c58;
  font-family: 'DejaVu Sans', sans-serif;
  font-size: 12px;
  font-weight: 400;
`;

const WindowButton = styled.button`
  display: flex;
  align-items: center;
  justify-content: center;
  width: 30px;
  height: 17px;
  border: 1px solid #8794a8;
  border-radius: 2px;
  background: linear-gradient(#dbe6f2, #c3d1e1);
  box-shadow: inset 0 0 0 1px #e6eef7;
`;

const Caret = styled.i`
  flex: none;
  border: ${({ $large }) => ($large ? 4 : 3)}px solid transparent;
  border-top: ${({ $large }) => ($large ? 5 : 4)}px solid ${({ color }) => color};
  border-bottom: 0;
`;

const QuickBar = styled.div`
  display: flex;
  align-items: center;
  height: 30px;
  padding: 0 13px 0 12px;
  border-bottom: 2px solid #979797;
  background: #dadada;
`;

const QuickButton = styled.button`
  display: flex;
  align-items: center;
  gap: 3px;
  margin-right: ${({ $gap }) => $gap || 0}px;
`;

const Account = styled.div`
  display: flex;
  gap: 24px;
  margin-left: auto;
`;

const AccountButton = styled.button`
  display: flex;
  align-items: center;
  gap: 4px;
  color: #444;
  font-family: Roboto, sans-serif;
  font-size: 11px;
`;

const Help = styled.span`
  width: 16px;
  border-radius: 8px;
  background: #606060;
  color: #fff;
  font-size: 13px;
  font-weight: 700;
  line-height: 16px;
`;

const TabBar = styled.div`
  display: flex;
  align-items: center;
  justify-content: space-between;
  height: 22px;
  padding-right: 7px;
  border-bottom: 1px solid #979797;
  background: #d9d9d9;
`;

const Tab = styled.div`
  display: flex;
  align-items: center;
  align-self: stretch;
  width: 200px;
  padding: 0 8px 0 10px;
  border-right: 2px solid #979797;
  background: #ebebeb;
`;

const TabName = styled.span`
  flex: 1;
  padding-left: 8px;
  color: #444;
  font-size: 13px;
`;

const TabClose = styled.button`
  display: flex;
`;

const Viewport = styled.main`
  position: relative;
  display: grid;
  flex: 1;
  min-height: 0;
`;

const SceneSvg = styled.svg`
  grid-area: 1 / 1;
  width: 100%;
  height: 100%;
`;

const Overlay = styled.div`
  display: flex;
  grid-area: 1 / 1;
  flex-direction: column;
  align-items: flex-start;
  padding: 4px;
`;

const CubeSvg = styled.svg`
  position: absolute;
  top: 10px;
  right: 3px;
`;

const CubeText = styled.text`
  fill: #8c8c8c;
  font-size: 17px;
`;

const AxisText = styled.text`
  font-family: 'Liberation Sans', sans-serif;
  font-size: 10px;
  font-weight: 700;
`;

const RibbonBar = styled.div`
  display: flex;
  height: 60px;
  background: #dcdcdc;
`;

const ModeButton = styled.button`
  display: flex;
  align-items: center;
  gap: 6px;
  width: 103px;
  padding-left: 6px;
  background: #ababab;
  color: #fff;
  font-weight: 700;
`;

const Grip = styled.span`
  width: 5px;
  height: 22px;
  margin-right: 19px;
  border: 1px solid #8a8a8a;
  border-width: 0 1px;
`;

const Group = styled.div`
  position: relative;
  display: flex;
  flex-direction: column;
  align-items: center;
  width: ${({ $width }) => $width}px;
  padding-top: 4px;

  &::after {
    content: '';
    position: absolute;
    top: 4px;
    right: 0;
    bottom: 4px;
    border-right: ${({ $last }) => ($last ? '0' : '1px')} solid #c0c0c0;
  }
`;

const Tools = styled.div`
  display: flex;
  gap: 3px;
  height: 40px;
`;

const Tool = styled.button`
  display: flex;
  align-items: center;
  justify-content: center;
  width: 40px;
  height: 40px;
  background: ${({ $picked }) => ($picked ? '#5a8ab8' : 'none')};
`;

const GroupLabel = styled.button`
  display: flex;
  align-items: center;
  justify-content: center;
  gap: 4px;
  height: 14px;
  line-height: 14px;
  ${({ $open }) =>
    $open &&
    css`
      width: 51px;
      background: #6799cf;
      color: #fff;
    `}
`;

const highlightBox = {
  modify: 'top: -5px; left: -4px; width: 63px; height: 71px;',
  finish: 'top: -5px; left: 0; width: 124px; height: 70px;',
  row: 'top: -5px; left: -8px; width: 280px; height: 37px;',
};

const Highlight = styled.div`
  position: absolute;
  z-index: 5;
  ${({ $kind }) => highlightBox[$kind]}
  border: 5px solid #ee1c25;
  pointer-events: none;
`;

const MenuPanel = styled.div`
  position: absolute;
  z-index: 3;
  top: 57px;
  left: 1px;
  width: 140px;
  padding: 1px 3px 2px;
  border: 1px solid #8a8a8a;
  border-radius: 2px;
  background: #fff;
`;

const MenuRow = styled.div`
  position: relative;
  border-bottom: ${({ $end }) => ($end ? '1px' : '0')} solid #7c7c7c;
`;

const MenuItem = styled.button`
  display: flex;
  align-items: center;
  gap: 3px;
  width: 100%;
  height: 24px;
  padding: 0 4px 0 1px;
  background: ${({ $active }) => ($active ? '#bebebe' : 'none')};
  text-align: left;
  white-space: nowrap;
`;

const IconGap = styled.span`
  width: 16px;
`;

const MenuLabel = styled.span`
  flex: 1;
`;

const Hotkey = styled.kbd`
  width: 38px;
  color: #444;
  font-family: 'Liberation Sans', sans-serif;
  font-size: 11px;
`;

const SubArrow = styled.i`
  border: 4px solid transparent;
  border-left: 5px solid #333;
  border-right: 0;
`;

const SubmenuBox = styled.div`
  position: absolute;
  z-index: 4;
  top: 1px;
  left: 128px;
  width: 138px;
  padding: 2px 4px;
  border: 1px solid #8a8a8a;
  border-radius: 2px;
  background: #fff;
`;

const Tooltip = styled.div`
  position: absolute;
  top: 6px;
  left: 141px;
  width: 328px;
  height: 88px;
  padding: 24px 13px;
  border-radius: 10px;
  background: #505050;
  color: #fff;
  font-size: 11px;
  font-weight: 700;
  line-height: 12px;
  white-space: nowrap;
`;

const Panel = styled.section`
  display: flex;
  align-items: center;
  width: 295px;
  height: 26px;
  padding: 0 6px 0 4px;
  border: 1px solid #a9a9a9;
  background: #d2d2d2;

  ${RibbonBar} + & {
    margin-top: 4px;
  }
`;

const PanelTitle = styled.h2`
  flex: 1;
  margin: 0;
  padding-left: 10px;
  color: #444;
  font-size: 10px;
  font-weight: 400;
`;

const PanelGap = styled.span`
  width: 11px;
`;

const PanelToggle = styled.button`
  display: flex;
`;

const Tree = styled.ul`
  display: flex;
  flex: 1;
  flex-direction: column;
  gap: 4px;
  margin: 0;
  padding: 4px 17px;
  list-style: none;
`;

const TreeRow = styled.li`
  display: flex;
  align-items: center;
  gap: 8px;
  height: 20px;
  padding-left: ${({ $nested }) => ($nested ? 19 : 0)}px;
`;

const ExpanderGap = styled.span`
  width: 10px;
`;

const Node = styled.div`
  display: flex;
  align-items: center;
  gap: 10px;
  height: 20px;
  padding: 0 12px 0 2px;
  background: #c9c9c9;

  span {
    padding-left: 4px;
  }
`;

const RootNode = styled.div`
  display: flex;
  align-items: center;
  height: 20px;
  padding-left: 1px;
  background: #c9c9c9;
`;

const RootName = styled.div`
  display: flex;
  align-items: center;
  gap: 10px;
  width: 114px;
  height: 18px;
  padding-left: 3px;
  border-left: 3px solid #8c8cff;
  background: #808080;
  color: #fff;
  font-weight: 700;

  span {
    padding-left: 3px;
    font-size: 11px;
  }
`;

const Radio = styled.input`
  width: 13px;
  height: 13px;
  margin: 0 8px 0 4px;
  border: 1px solid #333;
  border-radius: 50%;
  background: radial-gradient(#333 0 2px, #fff 3px);
  appearance: none;
`;

const BottomRow = styled.div`
  display: flex;
  align-items: center;
`;

const NavBar = styled.div`
  display: flex;
  align-items: center;
  gap: 11px;
  width: 145px;
  height: 24px;
  padding-left: 4px;
  background: #cacaca;
`;

const DisplayBar = styled(NavBar)`
  gap: 7px;
  width: 93px;
  margin-left: 7px;
  padding-left: 3px;
`;

const ShadeBar = styled(NavBar)`
  gap: 10px;
  width: 157px;
  margin-left: 7px;
`;

const NavButton = styled.button`
  display: flex;
  align-items: center;
  gap: 1px;
`;

const Timeline = styled.footer`
  display: flex;
  align-items: flex-start;
  height: 50px;
  padding: 8px 8px 0 10px;
  background: #cbcbcb;
`;

const Playback = styled.div`
  display: flex;
  gap: 8px;
  padding-top: 7px;
`;

const Track = styled.div`
  width: 40px;
  margin-left: 17px;
`;

const TrackRange = styled.div`
  height: 4px;
  background: #8c8cff;
`;

const TrackItems = styled.div`
  display: flex;
  gap: 7px;
  padding: 4px 0 3px 1px;
`;

const Bracket = styled.div`
  width: 25px;
  height: 6px;
  margin-left: 10px;
  border: 2px solid #606060;
  border-top: 0;
`;

const Marker = styled(Drawing)`
  margin-top: 1px;
`;

const SettingsButton = styled.button`
  display: flex;
  margin-left: auto;
  padding-top: 7px;
`;

export default App;
